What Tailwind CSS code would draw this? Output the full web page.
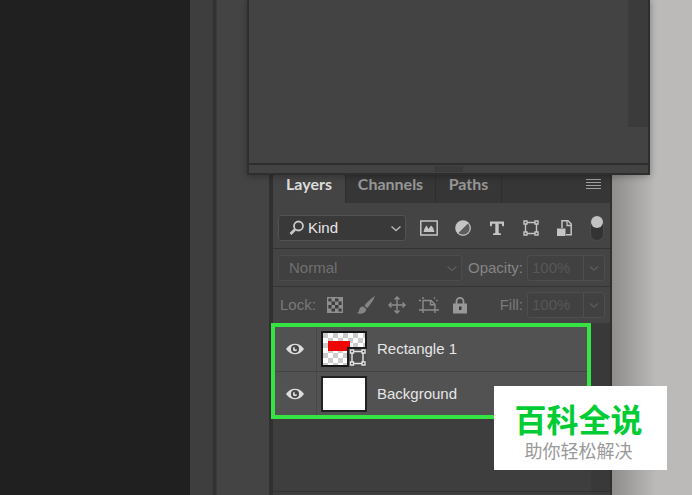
<!DOCTYPE html>
<html lang="en">
<head>
    <meta charset="UTF-8">
    <meta name="viewport" content="width=device-width, initial-scale=1.0">
    <title>Layers</title>
    <script src="https://cdn.jsdelivr.net/npm/@tailwindcss/browser@4"></script>
</head>
<body class="relative flex min-h-screen overflow-hidden bg-[#bbbab8] font-['Liberation_Sans',sans-serif] text-[15px] leading-5 text-[#e6e6e6]">
    <!-- document area and dock -->
    <main class="w-[190px] shrink-0 bg-[#202020]"></main>
    <div class="w-[22px] shrink-0 bg-[#3e3e3e]"></div>
    <div class="w-[5px] shrink-0 border-x border-[#3a3a3a] bg-[#323232]"></div>
    <div class="w-[52px] shrink-0 bg-[#444]"></div>

    <!-- layers panel -->
    <section class="flex w-[343px] shrink-0 flex-col border-r-2 border-l-4 border-[#303030] bg-[#444] pt-[167px]">
        <nav class="flex h-9 shrink-0 items-stretch bg-[#363636] font-['Lato',sans-serif] text-base font-bold text-[#979797]">
            <button class="w-[73px] border-r border-[#2e2e2e] bg-[#444] pb-0.5 text-[#dcdcdc]">Layers</button>
            <button class="w-[90px] border-r border-[#2e2e2e] pb-0.5">Channels</button>
            <button class="w-[66px] border-r border-[#2e2e2e] pb-0.5">Paths</button>
            <button class="mr-2 ml-auto pb-0.5" aria-label="Panel menu">
                <svg class="h-3 w-4" viewBox="0 0 16 12" stroke="#a0a0a0"><path d="M0 1.5h15M0 4.5h15M0 7.5h15M0 10.5h15"/></svg>
            </button>
        </nav>

        <div class="flex h-[46px] shrink-0 items-center gap-3.5 border-b border-[#333] pt-1 pr-1 pl-[5px]">
            <label class="grid h-[26px] w-32 items-center">
                <select class="col-start-1 row-start-1 h-[26px] appearance-none rounded-[3px] border border-[#525252] bg-[#393939] pl-[29px]" aria-label="Filter type">
                    <option>Kind</option>
                </select>
                <svg class="pointer-events-none col-start-1 row-start-1 ml-[11px] h-4 w-4" viewBox="0 0 16 16" fill="none" stroke="#c8c8c8"><circle cx="9.5" cy="6" r="4.5" stroke-width="1.8"/><path d="M6 9.5L1.5 14" stroke-width="2.6"/></svg>
                <svg class="pointer-events-none col-start-1 row-start-1 mr-1 h-3 w-3 justify-self-end" viewBox="0 0 12 12" fill="none" stroke="#b4b4b4" stroke-width="1.5"><path d="M1.5 4.5L6 8.5l4.5-4"/></svg>
            </label>
            <div class="flex items-center gap-4">
                <button aria-label="Pixel layers">
                    <svg class="h-[18px] w-[18px]" viewBox="0 0 18 18"><path d="M.8 2h16.4v14H.8z" fill="none" stroke="#c4c4c4" stroke-width="1.5"/><path d="M3.500 13l1-3.500L6.500 6.500l2 3.500 2.500-3.500 2 2L14.500 13z" fill="#c4c4c4"/></svg>
                </button>
                <button aria-label="Adjustment layers">
                    <svg class="h-[18px] w-[18px]" viewBox="0 0 18 18"><circle cx="9" cy="9" r="7.800" fill="#c4c4c4"/><path d="M14 4L4 14A7 7 0 0 0 14 4z" fill="#5c5c5c" stroke="#c4c4c4" stroke-width=".8"/></svg>
                </button>
                <button aria-label="Type layers">
                    <svg class="h-[18px] w-[18px]" viewBox="0 0 18 18" fill="#c4c4c4"><path d="M2 2.500h14V7.200h-1.600l-.7-2.400h-3V14l2.300.5V16H5v-1.500l2.300-.5V4.800h-3L3.600 7.200H2z"/></svg>
                </button>
                <button aria-label="Shape layers">
                    <svg class="h-[18px] w-[18px]" viewBox="0 0 18 18" fill="#444" stroke="#c4c4c4" stroke-width="1.400"><path d="M3.500 3.500h11v11h-11z"/><path d="M2 2h3v3H2zM13 2h3v3h-3zM2 13h3v3H2zM13 13h3v3h-3z"/></svg>
                </button>
                <button aria-label="Smart objects">
                    <svg class="h-[18px] w-[18px]" viewBox="0 0 18 18"><path d="M6 9V1.800h6L15.200 5v10.800H10" fill="none" stroke="#c4c4c4" stroke-width="1.500"/><path d="M11 2v4.500h4" fill="none" stroke="#c4c4c4" stroke-width="1.300"/><path d="M1 9.500h8.500V17H1z" fill="#c4c4c4"/></svg>
                </button>
                <button class="flex h-[26px] w-[14px] justify-center rounded-full border border-[#4c4c4c] bg-[#333]" aria-label="Toggle filtering">
                    <span class="h-3 w-3 shrink-0 rounded-full bg-[#c2c2c2]"></span>
                </button>
            </div>
        </div>

        <div class="flex h-[38px] shrink-0 items-center border-b border-[#343434] pr-[5px] pl-[5px] text-[#707070]">
            <label class="grid h-[26px] flex-1 items-center">
                <select class="col-start-1 row-start-1 h-[26px] w-full appearance-none rounded-[3px] border border-[#4c4c4c] bg-[#404040] pl-2.5 opacity-100" aria-label="Blend mode" disabled>
                    <option>Normal</option>
                </select>
                <svg class="pointer-events-none col-start-1 row-start-1 mr-1 h-3 w-3 justify-self-end" viewBox="0 0 12 12" fill="none" stroke="#5a5a5a" stroke-width="1.5"><path d="M1.5 4.500L6 8.500l4.500-4"/></svg>
            </label>
            <label for="opacity" class="mr-1 ml-1.5 text-[#858585]">Opacity:</label>
            <div class="flex h-[26px] w-[78px] rounded-[3px] border border-[#4e4e4e] bg-[#414141]">
                <input id="opacity" class="w-[55px] pl-1 text-[#575757]" value="100%" disabled>
                <button class="flex flex-1 items-center justify-center border-l border-[#4e4e4e]" aria-label="Opacity slider" disabled>
                    <svg class="h-3 w-3" viewBox="0 0 12 12" fill="none" stroke="#5a5a5a" stroke-width="1.5"><path d="M2 4.500L6 8l4-3.500"/></svg>
                </button>
            </div>
        </div>

        <div class="flex h-[36px] shrink-0 items-center pr-[5px] pl-[7px] text-[#7a7a7a]">
            <span class="mr-2.5">Lock:</span>
            <div class="flex items-center gap-[13px]">
                <button aria-label="Lock transparent pixels" disabled>
                    <svg class="h-[18px] w-[18px]" viewBox="0 0 18 18"><path d="M1.700 1.700h14.600v14.600H1.700z" fill="#3c3c3c" stroke="#8e8e8e" stroke-width="1.400"/><path d="M5.500 2H9v3.500H5.500zM12.500 2H16v3.500h-3.500zM2 5.500h3.500V9H2zM9 5.500h3.500V9H9zM5.500 9H9v3.500H5.500zM12.500 9H16v3.500h-3.500zM2 12.500h3.500V16H2zM9 12.500h3.500V16H9z" fill="#8e8e8e"/></svg>
                </button>
                <button aria-label="Lock image pixels" disabled>
                    <svg class="h-5 w-[18px]" viewBox="0 0 18 20" fill="#858585"><path d="M18 1c-4 2.500-8 6-10.500 9.500l2.700 2.700C13 10 16.500 5 18 1z"/><path d="M6.500 11.500c-2.200-.2-3.700 1-4.200 3C2 16.300 1.300 17.300 0 18c3 1.300 7.500.7 9-2.300.2-1 .1-1.500-.1-2z"/></svg>
                </button>
                <button aria-label="Lock position" disabled>
                    <svg class="h-[18px] w-[18px]" viewBox="0 0 18 18" fill="none" stroke="#8c8c8c" stroke-width="1.400"><path d="M9 1v16M1 9h16M6.500 3.500L9 1l2.500 2.500M6.500 14.500L9 17l2.500-2.500M3.500 6.500L1 9l2.500 2.500M14.500 6.500L17 9l-2.500 2.500"/></svg>
                </button>
                <button aria-label="Lock artboard nesting" disabled>
                    <svg class="h-[18px] w-5" viewBox="0 0 20 18" fill="none" stroke="#8c8c8c" stroke-width="1.400"><path d="M0 4.500h2M3.500 4.500H12l4 4V14M4 1v2M4 4.500V17M0 14h20M16 14v3M11.500 4.500v4.200H16"/><path d="M15 1.500l1 1M17.500 4l1 1"/></svg>
                </button>
                <button aria-label="Lock all" disabled>
                    <svg class="h-[18px] w-4" viewBox="0 0 16 18"><path d="M4.500 8V5.300a3.500 3.500 0 0 1 7 0V8" fill="none" stroke="#989898" stroke-width="1.800"/><path d="M1 7.500h14V17.500H1z" fill="#989898"/><path d="M7 10.500h2.500V14H7z" fill="#3a3a3a"/></svg>
                </button>
            </div>
            <label for="fill" class="mr-1 ml-auto">Fill:</label>
            <div class="flex h-[26px] w-[78px] rounded-[3px] border border-[#4e4e4e] bg-[#414141]">
                <input id="fill" class="w-[55px] pl-1 text-[#575757]" value="100%" disabled>
                <button class="flex flex-1 items-center justify-center border-l border-[#4e4e4e]" aria-label="Fill slider" disabled>
                    <svg class="h-3 w-3" viewBox="0 0 12 12" fill="none" stroke="#5a5a5a" stroke-width="1.5"><path d="M2 4.500L6 8l4-3.500"/></svg>
                </button>
            </div>
        </div>

        <div class="flex flex-1 bg-[#3e3e3e]">
            <div class="flex flex-1 flex-col">
                <ul class="-ml-0.5 border-4 border-[#35e343] bg-[#525252]">
                    <li class="flex h-[45px] items-center border-b border-[#444]">
                        <button class="flex w-[42px] items-center justify-center self-stretch border-r border-[#484848] pr-0.5" aria-label="Hide Rectangle 1">
                            <svg class="h-3 w-5" viewBox="0 0 20 12"><path d="M1 6c4.500-7 13.500-7 18 0-4.500 7-13.500 7-18 0z" fill="#dcdcdc"/><circle cx="10" cy="6" r="4" fill="#444"/><circle cx="10" cy="6" r="2.200" fill="#ddd"/><circle cx="11" cy="5" r="1.500" fill="#444"/></svg>
                        </button>
                        <svg class="mr-2.5 ml-1 h-9 w-[46px]" viewBox="0 0 46 36">
                            <defs>
                                <pattern id="checker" width="10" height="10" patternUnits="userSpaceOnUse"><path d="M0 0h10v10H0z" fill="#fff"/><path d="M2 2h5v5H2zM7 7h3v3H7zM0 7h2v3H0zM7 0h3v2H7zM0 0h2v2H0z" fill="#ccc"/></pattern>
                            </defs>
                            <path d="M1 1h44v34H1z" fill="url(#checker)" stroke="#161616" stroke-width="2"/>
                            <path d="M7 10h22v10H7z" fill="#ee0505"/>
                            <path d="M26 16h20v20H26z" fill="#1c1c1c"/>
                            <path d="M28 18h18v18H28z" fill="#4c4c4c"/>
                            <g fill="#333" stroke="#e4e4e4" stroke-width="1.400"><path d="M31 20.500h11v12H31z" fill="#4c4c4c"/><path d="M29.500 19h3v3h-3zM41 19h3v3h-3zM29.500 31h3v3h-3zM41 31h3v3h-3z"/></g>
                        </svg>
                        <span>Rectangle 1</span>
                    </li>
                    <li class="flex h-[43px] items-center">
                        <button class="flex w-[42px] items-center justify-center self-stretch border-r border-[#484848] pr-0.5" aria-label="Hide Background">
                            <svg class="h-3 w-5" viewBox="0 0 20 12"><path d="M1 6c4.500-7 13.500-7 18 0-4.500 7-13.500 7-18 0z" fill="#dcdcdc"/><circle cx="10" cy="6" r="4" fill="#444"/><circle cx="10" cy="6" r="2.200" fill="#ddd"/><circle cx="11" cy="5" r="1.500" fill="#444"/></svg>
                        </button>
                        <span class="mr-2.5 ml-1 h-9 w-[46px] border-2 border-[#222] bg-white"></span>
                        <span>Background</span>
                    </li>
                </ul>
                <div class="mb-[3px] flex-1 border-b border-[#323232]"></div>
            </div>
            <div class="mb-[3px] w-[19px] border-b border-[#303030] bg-[#393939]"></div>
        </div>
    </section>
    <div class="flex-1 bg-linear-to-r from-[#8e8d8c] to-[#bbbab8] to-[44px]"></div>

    <!-- floating window over the panel -->
    <aside class="absolute top-0 left-[247px] flex h-[175px] w-[403px] flex-col border-x-2 border-b-2 border-[#2e2e2e] bg-[#434343] shadow-[0_1px_7px_rgba(0,0,0,0.3)]">
        <div class="flex flex-1 justify-end border-b-2 border-[#2e2e2e] pb-9">
            <div class="w-5 bg-[#3b3b3c]"></div>
        </div>
        <div class="flex h-2 items-center justify-center">
            <div class="h-1.5 w-7 border-x border-dotted border-[#373737] bg-[#3c3c3c]"></div>
        </div>
    </aside>

    <!-- site badge -->
    <div class="absolute top-[386px] left-[494px] flex h-[84px] w-[173px] flex-col items-center bg-white pt-3.5 pr-1 font-['Noto_Sans_CJK_SC',sans-serif]" lang="zh-CN">
        <strong class="text-[32px] leading-9 font-bold text-[#00cc33]">百科全说</strong>
        <span class="text-lg leading-7 text-[#999]">助你轻松解决</span>
    </div>
</body>
</html>
